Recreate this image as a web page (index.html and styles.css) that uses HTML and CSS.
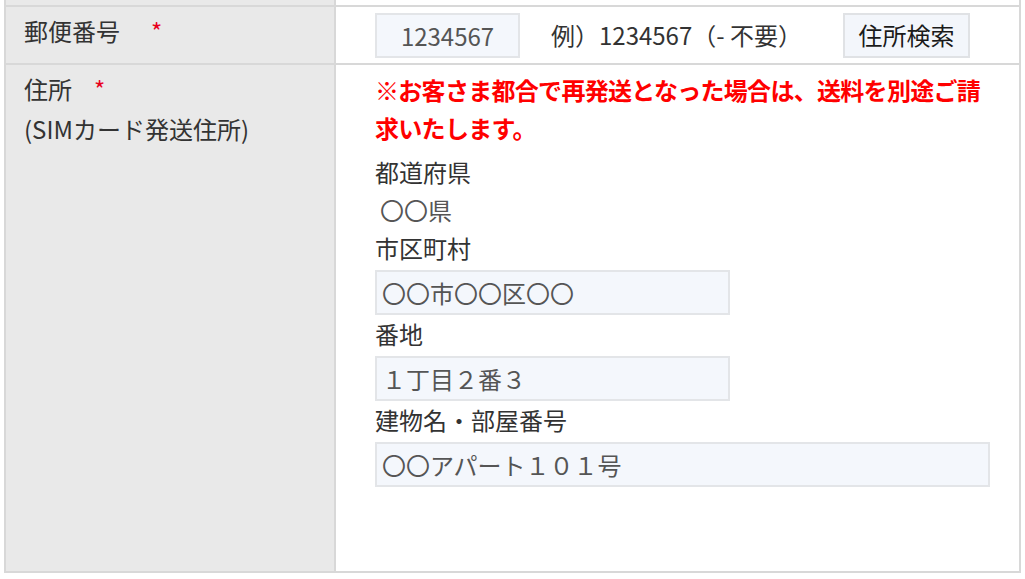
FILE: index.html
```html
<!DOCTYPE html>
<html lang="ja">
<head>
<meta charset="utf-8">
<title>住所入力</title>
<link rel="stylesheet" href="styles.css">
</head>
<body>
<div class="form-table">
  <div class="row stub">
    <div class="head"></div>
    <div class="cell"></div>
  </div>
  <div class="row">
    <div class="head"><span class="label-text">郵便番号</span><span class="req req-wide">*</span></div>
    <div class="cell cell-inline">
      <div class="input input-zip">1234567</div>
      <span class="hint">例）1234567（- 不要）</span>
      <div class="button">住所検索</div>
    </div>
  </div>
  <div class="row row-address">
    <div class="head"><span class="label-text">住所</span><span class="req">*</span><br><span class="label-text">(SIMカード発送住所)</span></div>
    <div class="cell cell-stack">
      <p class="notice">※お客さま都合で再発送となった場合は、送料を別途ご請求いたします。</p>
      <div class="field-label">都道府県</div>
      <div class="static-value">〇〇県</div>
      <div class="field-label">市区町村</div>
      <div class="input input-mid">〇〇市〇〇区〇〇</div>
      <div class="field-label">番地</div>
      <div class="input input-mid">１丁目２番３</div>
      <div class="field-label">建物名・部屋番号</div>
      <div class="input input-full">〇〇アパート１０１号</div>
    </div>
  </div>
</div>
</body>
</html>
```
FILE: styles.css
```css
* { box-sizing: border-box; }
html, body { margin: 0; padding: 0; background: #ffffff; }
body {
  font-family: "Noto Sans CJK JP", "Noto Sans", sans-serif;
  font-size: 24px;
  color: #333333;
}
.form-table {
  margin-left: 4px;
  width: 1017px;
  border-left: 2px solid #d8d8d8;
  border-right: 2px solid #d8d8d8;
  border-bottom: 2px solid #d8d8d8;
}
.row {
  display: grid;
  grid-template-columns: 330px 1fr;
  border-top: 2px solid #d8d8d8;
}
.row.stub {
  border-top: none;
  height: 5px;
}
.head {
  background: #e9e9e9;
  border-right: 2px solid #d8d8d8;
  padding: 4px 0 0 18px;
  line-height: 40px;
}
.row.stub .head { padding: 0; }
.req {
  color: #e8001c;
  margin-left: 22px;
}
.req-wide { margin-left: 31px; }
.cell {
  padding: 6px 29px 5px 39px;
}
.row.stub .cell { padding: 0; }
.cell-inline {
  display: flex;
  align-items: center;
}
.input {
  height: 45px;
  background: #f4f7fc;
  border: 2px solid #e3e5e8;
  color: #555555;
  line-height: 41px;
  padding: 0 5px;
  white-space: nowrap;
}
.input-zip {
  width: 145px;
  text-align: center;
}
.hint {
  margin-left: 31px;
  color: #333333;
  line-height: 38px;
  margin-top: -2px;
}
.button {
  margin-left: 41px;
  height: 45px;
  width: 127px;
  background: #f3f6fb;
  border: 2px solid #e0e2e5;
  color: #1a1a1a;
  line-height: 40px;
  text-align: center;
}
.cell-stack {
  padding-top: 6px;
  padding-bottom: 84px;
  line-height: 38px;
}
.notice {
  margin: 0 0 6px;
  color: #ff0000;
  font-weight: bold;
  line-height: 38px;
  letter-spacing: -0.7px;
}
.field-label {
  line-height: 38px;
  color: #333333;
}
.static-value {
  line-height: 38px;
  padding-left: 5px;
  color: #555555;
}
.cell-stack .input { margin-top: 3px; }
.input-mid { width: 355px; }
.input-full { width: 100%; }
```
